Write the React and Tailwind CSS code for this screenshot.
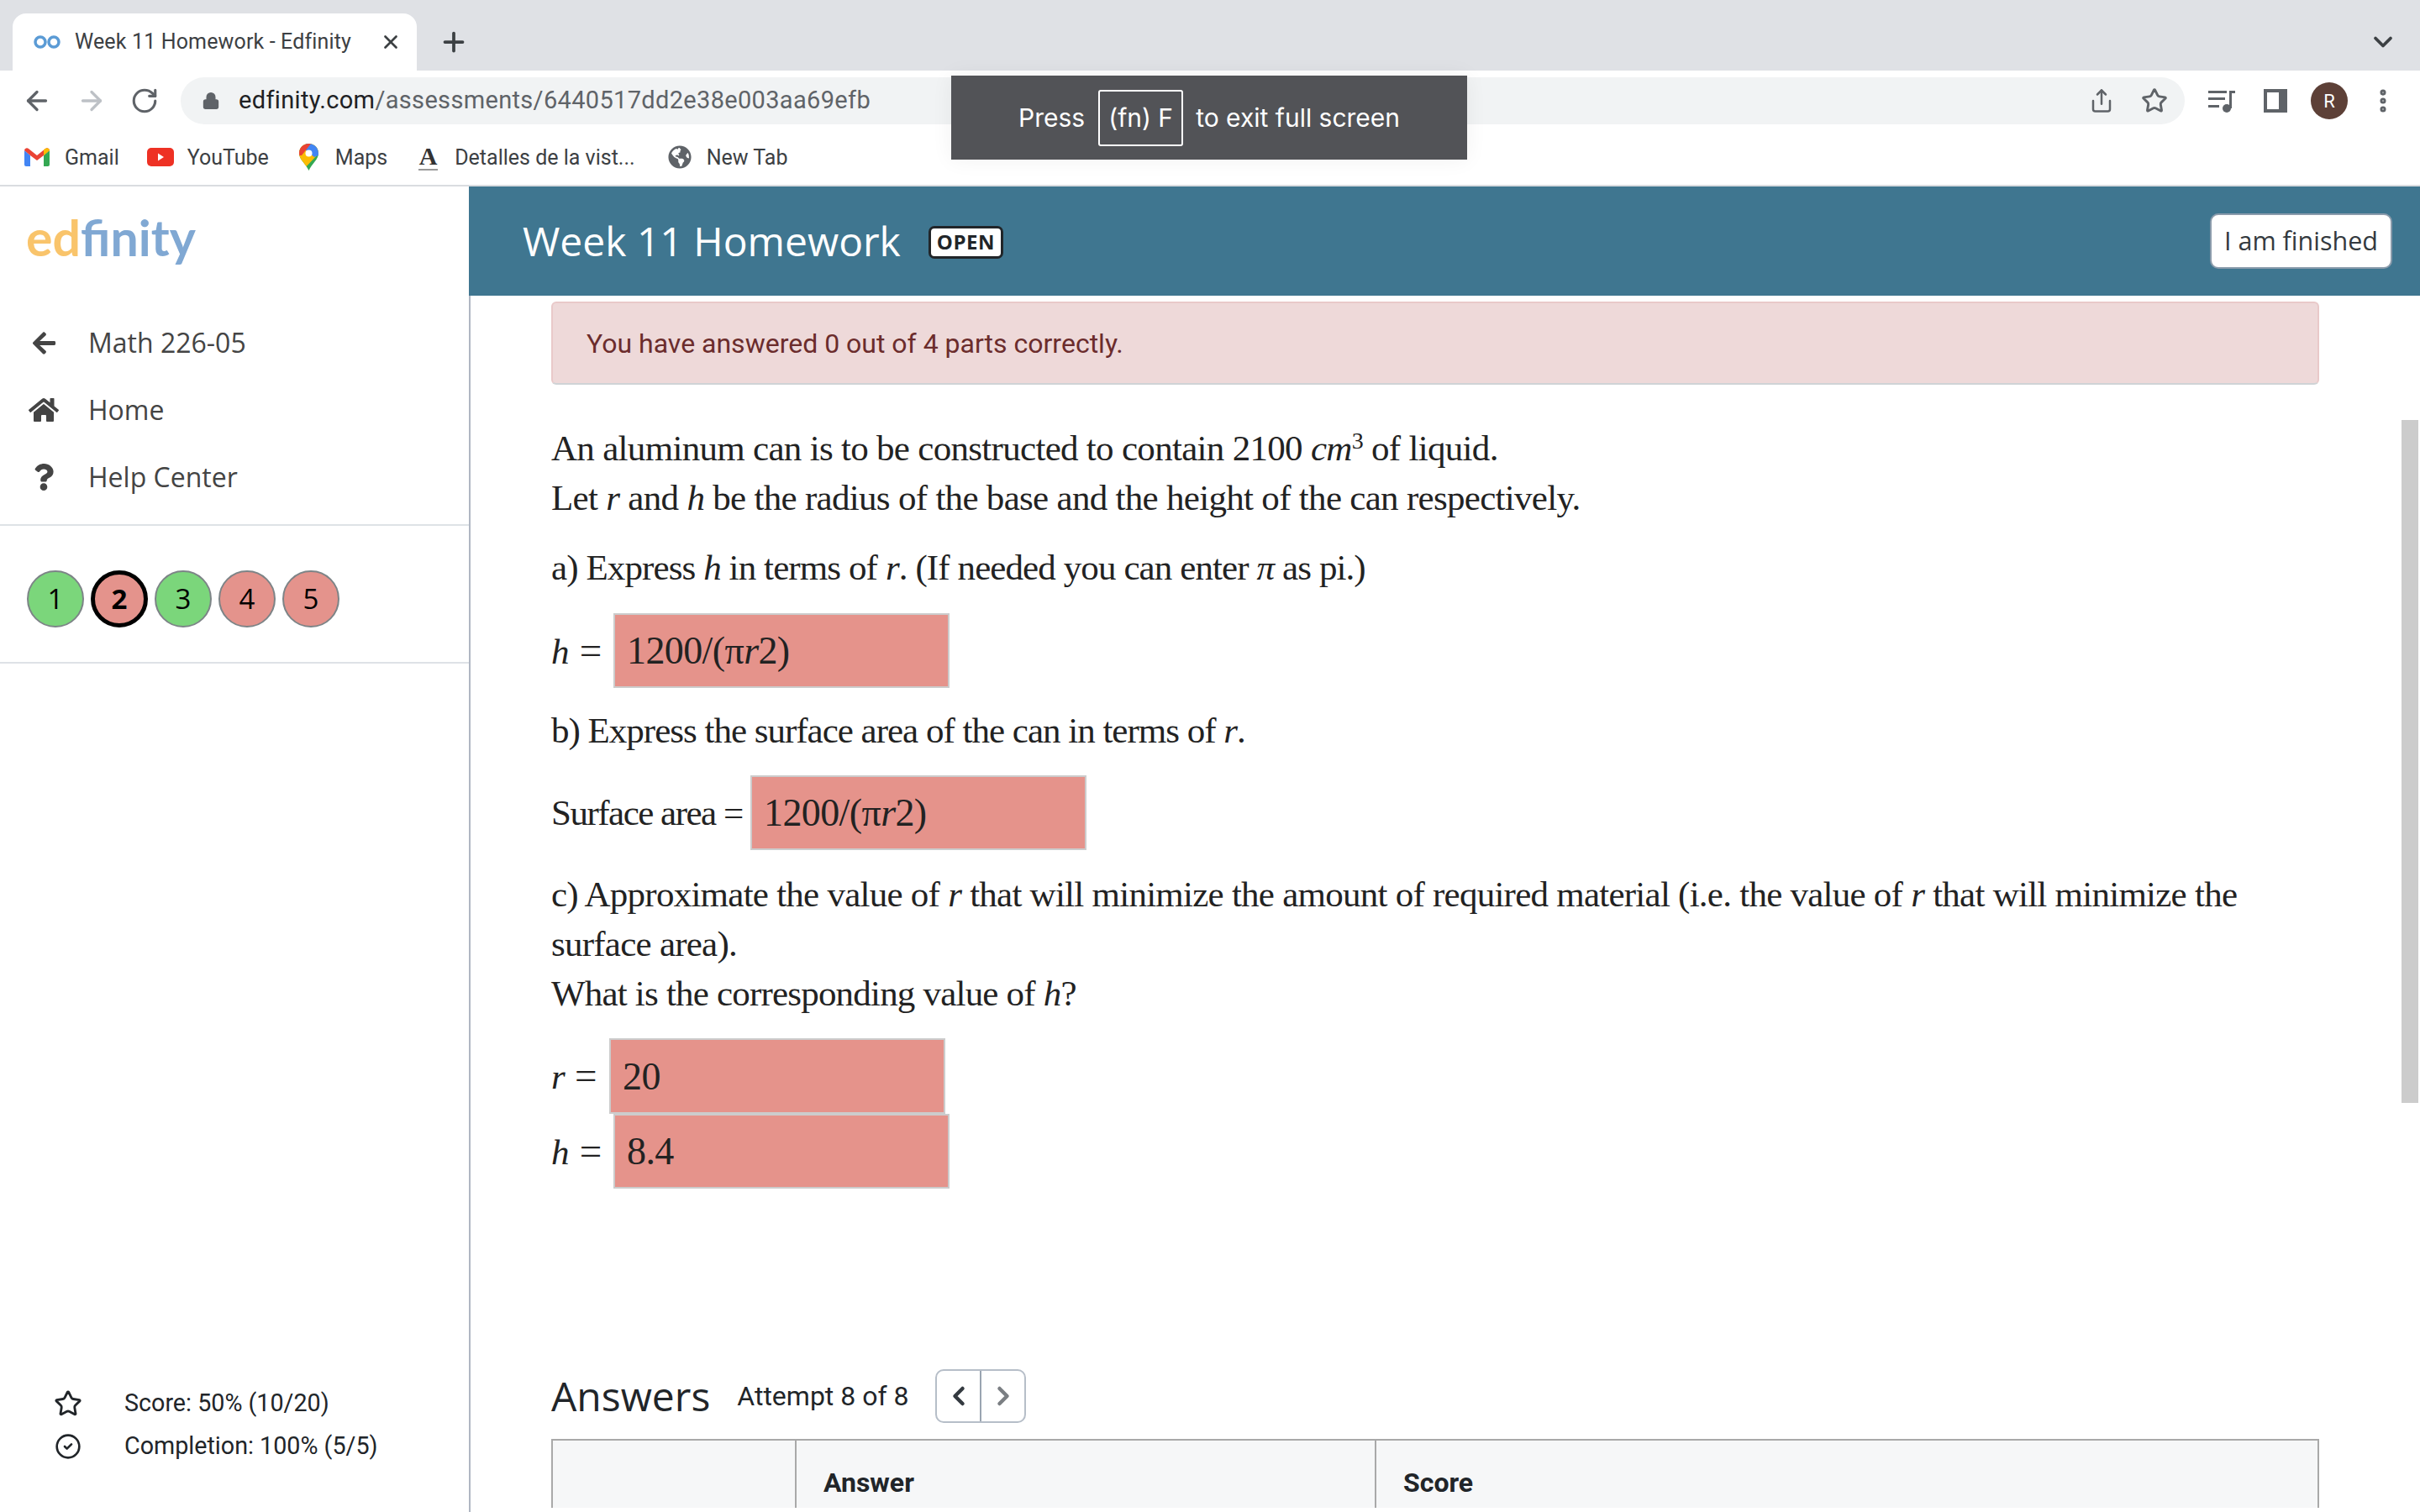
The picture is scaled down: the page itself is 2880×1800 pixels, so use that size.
import { ArrowLeft, ArrowRight, RotateCw, Lock, Plus, X, ChevronDown, Star, CircleCheck, Share, EllipsisVertical, ChevronLeft, ChevronRight } from 'lucide-react'
import { FaArrowLeft, FaHome, FaQuestion, FaGlobeAmericas } from 'react-icons/fa'

const serif = "font-['Liberation_Serif',serif]"
const roboto = "font-['Roboto',sans-serif]"
const openSans = "font-['Open_Sans',sans-serif]"

function GmailIcon() {
  return (
    <svg width="30" height="22" viewBox="0 0 30 22" className="shrink-0">
      <path d="M0 3v17a2 2 0 0 0 2 2h5V9z" fill="#4285f4" />
      <path d="M30 3v17a2 2 0 0 1-2 2h-5V9z" fill="#34a853" />
      <path d="M0 3a3 3 0 0 1 5-2l10 8 10-8a3 3 0 0 1 5 2l-7 6-8 6-8-6z" fill="#ea4335" />
      <path d="M23 9V2l2-1a3 3 0 0 1 5 2z" fill="#fbbc04" />
    </svg>
  )
}

function YoutubeIcon() {
  return (
    <svg width="32" height="22" viewBox="0 0 32 22" className="shrink-0">
      <rect width="32" height="22" rx="5" fill="#ee3124" />
      <path d="M13 6.500l7 4.500-7 4.500z" fill="#fff" />
    </svg>
  )
}

function MapsIcon() {
  return (
    <svg width="23" height="32" viewBox="0 0 23 32" className="shrink-0">
      <clipPath id="pin">
        <path d="M11.500 0C5 0 0 5 0 11.500 0 19 8 24 11.500 32 15 24 23 19 23 11.500 23 5 18 0 11.500 0z" />
      </clipPath>
      <g clipPath="url(#pin)">
        <rect width="23" height="32" fill="#34a853" />
        <path d="M0 0h23v12L4 32H0z" fill="#fbbc04" />
        <path d="M8 0h15v14l-5 2-6-5-4-3z" fill="#4285f4" />
        <path d="M0 0h14L3 14H0z" fill="#ea4335" />
      </g>
      <circle cx="11.500" cy="11.500" r="4" fill="#fff" />
    </svg>
  )
}

function Bookmark({ icon, label, className }) {
  return (
    <div className={`flex items-center shrink-0 ${className}`}>
      {icon}
      <span className="text-[25px] text-[#3c4043] leading-none whitespace-nowrap">{label}</span>
    </div>
  )
}

function NavRow({ icon, label }) {
  return (
    <div className="h-[80px] flex items-center text-[#444]">
      <div className="w-[38px] ml-[33px] flex justify-center">{icon}</div>
      <span className={`ml-[34px] text-[32px] ${openSans}`}>{label}</span>
    </div>
  )
}

function Bubble({ n, good, current }) {
  return (
    <div className={`w-[68px] h-[68px] rounded-full flex items-center justify-center text-[33px] text-black ${openSans} ${good ? 'bg-[#7bd67b]' : 'bg-[#e4938c]'} ${current ? 'border-[5px] border-black font-bold' : 'border-2 border-[#7d8487]'}`}>
      {n}
    </div>
  )
}

function AnswerBox({ children }) {
  return (
    <div className="w-[400px] h-full bg-[#e5938b] border-2 border-[#cccccc] flex items-center pl-[14px] text-[46px] tracking-[-0.6px] text-[#222]">
      {children}
    </div>
  )
}

const I = ({ children }) => <i className="italic">{children}</i>
const Eq = ({ className }) => <span className={`text-[47px] ${className}`}>=</span>

export default function App() {
  return (
    <div className={`relative w-[2880px] h-[1800px] overflow-hidden bg-white flex flex-col ${roboto}`}>
      {/* tab strip */}
      <div className="h-[84px] shrink-0 bg-[#dfe1e5] flex items-end">
        <div className="ml-[15px] w-[481px] h-[68px] bg-white rounded-t-[16px] flex items-center">
          <svg width="32" height="16" viewBox="0 0 32 16" className="ml-[25px] shrink-0" fill="none" stroke="#5b9bd5" strokeWidth="3.500">
            <circle cx="8" cy="8" r="6" />
            <circle cx="24" cy="8" r="6" />
          </svg>
          <span className="ml-[17px] text-[25px] tracking-[0.15px] text-[#3c4043] whitespace-nowrap">Week 11 Homework - Edfinity</span>
          <X size={26} strokeWidth={2.500} className="ml-[34px] text-[#3c4043]" />
        </div>
        <div className="h-[68px] flex items-center ml-[26px]">
          <Plus size={36} strokeWidth={2.500} className="text-[#3c4043]" />
        </div>
        <div className="h-[68px] flex items-center ml-auto mr-[26px]">
          <ChevronDown size={36} strokeWidth={2.500} className="text-[#3c4043]" />
        </div>
      </div>

      {/* address bar */}
      <div className="h-[72px] shrink-0 flex items-center relative">
        <ArrowLeft size={36} strokeWidth={2.200} className="ml-[26px] text-[#5f6368]" />
        <ArrowRight size={36} strokeWidth={2.200} className="ml-[29px] text-[#bdc1c6]" />
        <RotateCw size={34} strokeWidth={2.200} className="ml-[28px] text-[#5f6368]" />
        <div className="ml-[26px] w-[2385px] h-[56px] rounded-full bg-[#f1f3f4] flex items-center">
          <Lock size={22} fill="#5f6368" className="ml-[25px] text-[#5f6368]" />
          <span className="ml-[22px] text-[29px] tracking-[0.33px] text-[#202124] whitespace-nowrap">edfinity.com<span className="text-[#5f6368]">/assessments/6440517dd2e38e003aa69efb</span></span>
          <Share size={30} strokeWidth={2} className="ml-auto text-[#5f6368]" />
          <Star size={32} strokeWidth={2.200} className="ml-[32px] mr-[20px] text-[#5f6368]" />
        </div>
        <svg width="32" height="28" viewBox="0 0 32 28" className="ml-[28px] shrink-0" fill="#5f6368">
          <rect x="0" y="2" width="22" height="3" />
          <rect x="0" y="10" width="20" height="3" />
          <rect x="0" y="19" width="13" height="3" />
          <rect x="25" y="2" width="7" height="3" />
          <rect x="25" y="2" width="3" height="21" />
          <circle cx="22" cy="23" r="5" />
        </svg>
        <div className="ml-[34px] w-[28px] h-[28px] bg-[#5f6368] flex items-stretch shrink-0 p-[4px] pr-[10px]">
          <div className="bg-white flex-1" />
        </div>
        <div className="ml-[28px] w-[44px] h-[44px] rounded-full bg-[#5d4037] text-white text-[22px] flex items-center justify-center shrink-0">R</div>
        <EllipsisVertical size={34} strokeWidth={3} className="ml-[25px] text-[#5f6368]" />
      </div>

      {/* bookmarks */}
      <div className="h-[66px] pb-[2px] shrink-0 flex items-center border-b-2 border-[#dadce0]">
        <Bookmark className="ml-[29px] gap-[18px]" icon={<GmailIcon />} label="Gmail" />
        <Bookmark className="ml-[33px] gap-[16px]" icon={<YoutubeIcon />} label="YouTube" />
        <Bookmark className="ml-[36px] gap-[20px]" icon={<MapsIcon />} label="Maps" />
        <Bookmark className="ml-[37px] gap-[20px]" icon={<span className={`w-[23px] text-center text-[30px] font-bold leading-none border-b-2 border-[#999] text-[#333] ${serif}`}>A</span>} label="Detalles de la vist..." />
        <Bookmark className="ml-[39px] gap-[18px]" icon={<FaGlobeAmericas size={28} className="text-[#5f6368]" />} label="New Tab" />
      </div>

      <div className="flex-1 flex min-h-0">
        {/* sidebar */}
        <aside className="w-[560px] shrink-0 border-r-2 border-[#b0b7c3] flex flex-col">
          <div className="h-[146px] pl-[31px] pt-[25px] text-[59px] font-bold leading-[72px] font-['Lato',sans-serif]">
            <span className="text-[#f9c46b]">ed</span><span className="text-[#80a8d3]">finity</span>
          </div>
          <div className="border-b-2 border-[#dee2e6] h-[258px]">
            <NavRow icon={<FaArrowLeft size={31} />} label="Math 226-05" />
            <NavRow icon={<FaHome size={36} />} label="Home" />
            <NavRow icon={<FaQuestion size={32} />} label="Help Center" />
          </div>
          <div className="border-b-2 border-[#dee2e6] h-[164px] flex items-start gap-[8px] pl-[32px] pt-[53px]">
            <Bubble n={1} good />
            <Bubble n={2} current />
            <Bubble n={3} good />
            <Bubble n={4} />
            <Bubble n={5} />
          </div>
          <div className="mt-auto pb-[63px] flex flex-col gap-[21px] text-[28.700px] text-[#212529]">
            <div className="flex items-center h-[30px]">
              <Star size={34} strokeWidth={2} className="ml-[64px]" />
              <span className="ml-[50px]">Score: 50% (10/20)</span>
            </div>
            <div className="flex items-center h-[30px]">
              <CircleCheck size={32} strokeWidth={2} className="ml-[65px]" />
              <span className="ml-[51px]">Completion: 100% (5/5)</span>
            </div>
          </div>
        </aside>

        <div className="flex-1 flex flex-col min-w-0">
          {/* homework header */}
          <header className="-ml-[2px] h-[130px] shrink-0 bg-[#3f7690] flex items-center pl-[64px] pr-[33px]">
            <h1 className={`text-[48px] text-white leading-none ${openSans}`}>Week 11 Homework</h1>
            <span className={`ml-[33px] mt-[2px] h-[39px] w-[89px] rounded-[7px] bg-white border-[3px] border-[#212529] flex items-center justify-center text-[24px] font-bold tracking-[0.5px] text-[#212529] ${openSans}`}>OPEN</span>
            <button className={`ml-auto w-[217px] h-[66px] rounded-[10px] bg-white border-2 border-[#8a9bab] text-[30.500px] text-[#343a40] ${openSans}`}>I am finished</button>
          </header>

          <div className="flex-1 flex min-h-0">
            <main className="flex-1 pl-[96px] min-w-0">
              <div className="w-[2104px] h-[99px] mt-[7px] rounded-[6px] bg-[#eed9d9] border-2 border-[#e9c9c9] border-b-[#cfd3d6] flex items-center pl-[40px] text-[32px] text-[#6b2c2c]">
                You have answered 0 out of 4 parts correctly.
              </div>

              <div className={`text-[43px] leading-[59px] tracking-[-0.7px] text-[#222] ${serif}`}>
                <p className="mt-[46px]">An aluminum can is to be constructed to contain 2100 <I>cm</I><sup className="text-[28px] leading-none">3</sup> of liquid.</p>
                <p>Let <I>r</I> and <I>h</I> be the radius of the base and the height of the can respectively.</p>
                <p className="mt-[24px] tracking-[-0.9px]">a) Express <I>h</I> in terms of <I>r</I>. (If needed you can enter <I>π</I> as pi.)</p>
                <div className="mt-[25px] h-[89px] flex items-center">
                  <span className="w-[74px] whitespace-nowrap"><I>h</I><Eq className="ml-[13px]" /></span>
                  <AnswerBox>1200/(π<I>r</I>2)</AnswerBox>
                </div>
                <p className="mt-[21px] tracking-[-1px]">b) Express the surface area of the can in terms of <I>r</I>.</p>
                <div className="mt-[24px] h-[89px] flex items-center">
                  <span className="w-[237px] whitespace-nowrap tracking-[-1.500px]">Surface area =</span>
                  <AnswerBox>1200/(π<I>r</I>2)</AnswerBox>
                </div>
                <p className="mt-[23px] w-[2104px] tracking-[-0.75px]">c) Approximate the value of <I>r</I> that will minimize the amount of required material (i.e. the value of <I>r</I> that will minimize the surface area).</p>
                <p className="tracking-[-0.8px]">What is the corresponding value of <I>h</I>?</p>
                <div className="mt-[24px] h-[90px] flex items-center">
                  <span className="w-[69px] whitespace-nowrap"><I>r</I><Eq className="ml-[12px]" /></span>
                  <AnswerBox>20</AnswerBox>
                </div>
                <div className="h-[89px] flex items-center">
                  <span className="w-[74px] whitespace-nowrap"><I>h</I><Eq className="ml-[13px]" /></span>
                  <AnswerBox>8.4</AnswerBox>
                </div>
              </div>

              <div className="mt-[215px] h-[64px] flex items-center">
                <h2 className={`text-[48px] text-[#212529] leading-none ${openSans}`}>Answers</h2>
                <span className="ml-[32px] text-[32px] text-[#212529]">Attempt 8 of 8</span>
                <div className="ml-[32px] w-[108px] h-[64px] flex rounded-[10px] border-2 border-[#b6bec8]">
                  <div className="flex-1 flex items-center justify-center border-r-2 border-[#9aa5b1]">
                    <ChevronLeft size={36} strokeWidth={3} className="text-[#343a40]" />
                  </div>
                  <div className="flex-1 flex items-center justify-center">
                    <ChevronRight size={36} strokeWidth={3} className="text-[#7b7f83]" />
                  </div>
                </div>
              </div>

              <div className="mt-[19px] w-[2104px] h-[82px] bg-[#f6f7f8] border-x-2 border-t-2 border-[#a9a9a9] grid grid-cols-[290px_690px_1fr] text-[32px] font-bold text-[#212529]">
                <div className="border-r-2 border-[#a9a9a9]" />
                <div className="border-r-2 border-[#a9a9a9] pl-[32px] pt-[26px]">Answer</div>
                <div className="pl-[32px] pt-[26px]">Score</div>
              </div>
            </main>
            {/* page scrollbar */}
            <div className="w-[22px] shrink-0 pt-[148px]">
              <div className="w-[20px] h-[813px] bg-[#cccccc]" />
            </div>
          </div>
        </div>
      </div>

      {/* full screen notice */}
      <div className="absolute left-[1132px] top-[90px] w-[614px] h-[100px] bg-[#525357] shadow-[0_0_24px_rgba(0,0,0,0.06)] flex items-center pl-[80px] text-[30px] text-white font-['Inter',sans-serif]">
        <span>Press</span>
        <span className="ml-[16px] w-[101px] h-[67px] border-2 border-white rounded-[3px] flex items-center justify-center">(fn) F</span>
        <span className="ml-[15px]">to exit full screen</span>
      </div>
    </div>
  )
}
